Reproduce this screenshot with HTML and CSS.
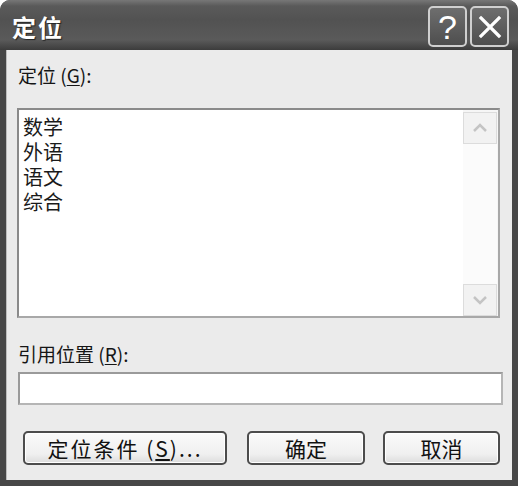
FILE: index.html
```html
<!DOCTYPE html>
<html lang="zh-CN">
<head>
<meta charset="utf-8">
<title>定位</title>
<link rel="stylesheet" href="styles.css">
</head>
<body>
<div class="window">
  <div class="titlebar">
    <span class="title">定位</span>
    <div class="tbuttons">
      <span class="tbtn">?</span>
      <span class="tbtn">
        <svg width="26" height="26" viewBox="0 0 26 26"><path d="M4 4 L22 22 M22 4 L4 22" stroke="#fff" stroke-width="3.2" stroke-linecap="square"/></svg>
      </span>
    </div>
  </div>
  <div class="content">
    <div class="label">定位 (<u>G</u>):</div>
    <div class="listbox">
      <ul class="items">
        <li>数学</li>
        <li>外语</li>
        <li>语文</li>
        <li>综合</li>
      </ul>
      <div class="scrollbar">
        <div class="sbtn">
          <svg width="16" height="10" viewBox="0 0 16 10"><path d="M2 8 L8 2 L14 8" fill="none" stroke="#c4c4c4" stroke-width="2.5"/></svg>
        </div>
        <div class="strack"></div>
        <div class="sbtn">
          <svg width="16" height="10" viewBox="0 0 16 10"><path d="M2 2 L8 8 L14 2" fill="none" stroke="#c4c4c4" stroke-width="2.5"/></svg>
        </div>
      </div>
    </div>
    <div class="label label2">引用位置 (<u>R</u>):</div>
    <div class="input"></div>
    <div class="buttons">
      <span class="btn btn-wide">定位条件 (<u>S</u>)...</span>
      <span class="btn btn-ok">确定</span>
      <span class="btn btn-cancel">取消</span>
    </div>
  </div>
</div>
</body>
</html>
```
FILE: styles.css
```css
html, body {
  margin: 0;
  padding: 0;
  background: #ffffff;
}
body {
  font-family: "Noto Sans CJK SC", "Liberation Sans", sans-serif;
  color: #111;
}
.window {
  width: 518px;
  height: 486px;
  box-sizing: border-box;
  background: #474747;
  border-radius: 10px 10px 0 0;
  display: flex;
  flex-direction: column;
  overflow: hidden;
}
.titlebar {
  height: 50px;
  flex: none;
  display: flex;
  align-items: center;
  justify-content: space-between;
  padding: 0 9px 0 12px;
  background: linear-gradient(#777 0px, #5a5a5a 6px, #525252 20px, #5a5a5a 40px, #3c3c3c 50px);
}
.title {
  color: #fff;
  font-size: 24px;
  font-weight: bold;
  text-shadow: 1px 1px 1px #222;
  letter-spacing: 2px;
  margin-top: 2px;
}
.tbuttons {
  display: flex;
  gap: 3px;
  margin-top: 3px;
}
.tbtn {
  width: 39px;
  height: 41px;
  box-sizing: border-box;
  border: 2px solid #cfcfcf;
  border-radius: 5px;
  background: linear-gradient(#6e6e6e, #4e4e4e);
  color: #fff;
  font-family: "Liberation Sans", sans-serif;
  font-size: 34px;
  line-height: 36px;
  display: flex;
  align-items: center;
  justify-content: center;
}
.content {
  flex: 1;
  margin: 0 6px 6px 6px;
  background: #ebebeb;
  padding: 12px 0 0 10px;
  box-sizing: border-box;
  border-left: 1px solid #bdbdbd;
}
.label {
  font-size: 19px;
  line-height: 26px;
  color: #151515;
  padding-left: 1px;
}
.label u {
  text-decoration-thickness: 1px;
  text-underline-offset: 2px;
}
.listbox {
  margin-top: 20px;
  width: 483px;
  height: 210px;
  box-sizing: border-box;
  border: 2px solid #8a8a8a;
  border-right-color: #a8a8a8;
  border-bottom-color: #a8a8a8;
  background: #fff;
  display: flex;
}
.items {
  list-style: none;
  margin: 0;
  padding: 4px 0 0 4px;
  flex: 1;
  font-size: 20px;
  line-height: 25px;
  color: #1a1a1a;
}
.items li {
  height: 25px;
}
.scrollbar {
  width: 34px;
  display: flex;
  flex-direction: column;
  padding: 2px 1px 0 0;
  background: #f6f6f6;
}
.sbtn {
  height: 30px;
  border: 1px solid #dcdcdc;
  background: #f2f2f2;
  display: flex;
  align-items: center;
  justify-content: center;
}
.strack {
  flex: 1;
  background: #fbfbfb;
}
.label2 {
  margin-top: 23px;
}
.input {
  margin-top: 5px;
  margin-left: 1px;
  width: 485px;
  height: 33px;
  box-sizing: border-box;
  border: 2px solid #9a9a9a;
  border-right-color: #b5b5b5;
  border-bottom-color: #b5b5b5;
  background: #fff;
}
.buttons {
  margin-top: 26px;
  display: flex;
  padding-left: 6px;
}
.btn {
  height: 34px;
  box-sizing: border-box;
  border: 2px solid #4c4c4c;
  border-radius: 5px;
  background: linear-gradient(#fafafa, #f0f0f0 70%, #dcdcdc);
  box-shadow: inset 0 0 0 1px #fff;
  display: flex;
  align-items: center;
  justify-content: center;
  font-size: 21px;
  color: #111;
}
.btn-wide {
  width: 204px;
  letter-spacing: 2px;
}
.btn-ok {
  width: 118px;
  margin-left: 20px;
}
.btn-cancel {
  width: 117px;
  margin-left: 18px;
}
```
